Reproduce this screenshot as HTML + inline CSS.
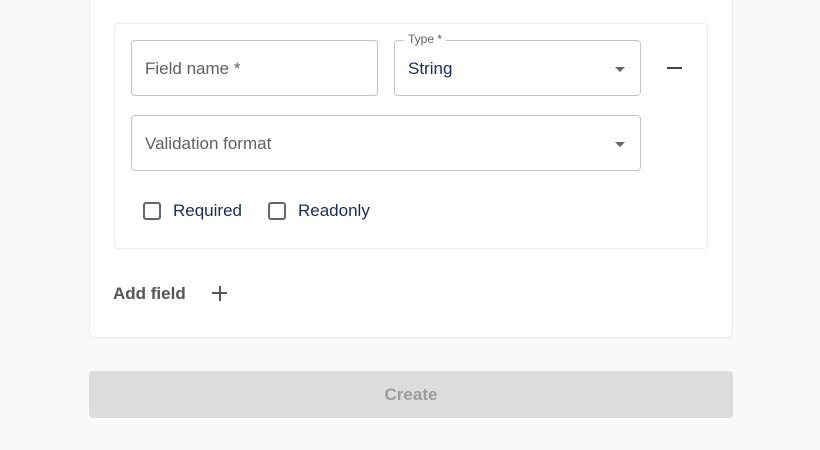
<!DOCTYPE html>
<html><head><style>
body{margin:0;width:820px;height:450px;background:#f9f9f9;font-family:"Liberation Sans",Arial,sans-serif;position:relative;overflow:hidden}
.abs{position:absolute;box-sizing:border-box}
.card{left:89px;top:-10px;width:644px;height:348px;background:#fff;border:1px solid #ececec;border-radius:6px}
.inner{left:114px;top:23px;width:594px;height:226px;border:1px solid #ececec;border-radius:4px;background:#fff}
.inp{border:1px solid #c4c4c4;border-radius:4px;height:56px;background:#fff}
.ph{position:absolute;left:13px;top:18px;font-size:17px;color:#616161}
.val{position:absolute;left:13px;top:18px;font-size:17px;color:#1a2a5c}
.arrow{position:absolute;right:15px;top:26px;width:0;height:0;border-left:5px solid transparent;border-right:5px solid transparent;border-top:5px solid #666}
.lbl{position:absolute;left:9px;top:-9px;font-size:12px;color:#616161;background:#fff;padding:0 4px}
.cb{width:18px;height:18px;border:2px solid #666;border-radius:3px}
.cbl{font-size:17px;color:#1a2a5c}
</style></head><body>
<div class="abs card"></div>
<div class="abs inner"></div>
<div class="abs inp" style="left:131px;top:40px;width:247px"><span class="ph">Field name *</span></div>
<div class="abs inp" style="left:394px;top:40px;width:247px"><span class="lbl">Type *</span><span class="val">String</span><span class="arrow"></span></div>
<div class="abs" style="left:667px;top:67px;width:15px;height:2px;background:#444"></div>
<div class="abs inp" style="left:131px;top:115px;width:510px"><span class="ph">Validation format</span><span class="arrow"></span></div>
<div class="abs cb" style="left:143px;top:202px"></div>
<div class="abs cbl" style="left:173px;top:201px">Required</div>
<div class="abs cb" style="left:268px;top:202px"></div>
<div class="abs cbl" style="left:298px;top:201px">Readonly</div>
<div class="abs" style="left:113px;top:284px;font-size:17px;font-weight:bold;color:#555">Add field</div>
<div class="abs" style="left:212px;top:292px;width:15px;height:2px;background:#555"></div>
<div class="abs" style="left:218.5px;top:285.5px;width:2px;height:15px;background:#555"></div>
<div class="abs" style="left:89px;top:371px;width:644px;height:47px;background:#dcdcdc;border-radius:4px;text-align:center;line-height:47px;font-size:17px;font-weight:bold;color:#9c9c9c">Create</div>
</body></html>
